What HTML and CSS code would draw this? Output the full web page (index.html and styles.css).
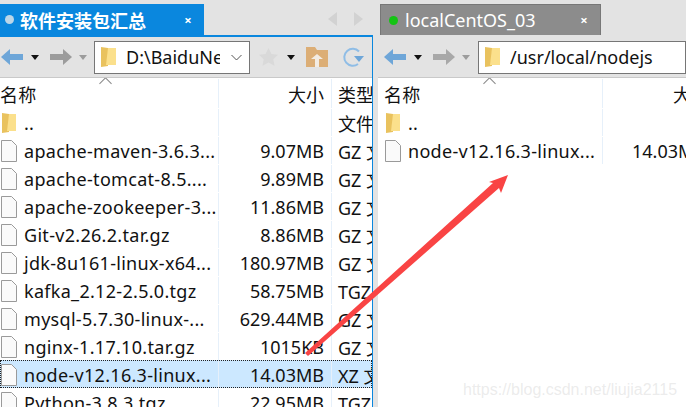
FILE: index.html
```html
<!DOCTYPE html>
<html lang="zh-CN">
<head>
<meta charset="UTF-8">
<title>软件安装包汇总</title>
<link rel="stylesheet" href="styles.css">
</head>
<body>
<div class="app">
	<section class="pane pane-left">
		<div class="tabbar">
			<div class="tab tab-on">
				<i class="dot dot-grey"></i>
				<span class="tab-name tab-name-cn">软件安装包汇总</span>
				<span class="tab-x">×</span>
			</div>
			<div class="tab-nav">
				<svg width="10" height="14" viewBox="0 0 10 14"><path d="M9 0v14L0 7z" fill="#d2d2d2"/></svg>
				<svg width="10" height="14" viewBox="0 0 10 14"><path d="M1 0v14l9-7z" fill="#d2d2d2"/></svg>
			</div>
		</div>
		<div class="panel panel-blue">
			<div class="toolbar">
				<svg class="nav-arrow" width="23" height="16" viewBox="0 0 23 16"><path d="M0 8l9-8v5h13v6H9v5z" fill="#6ea6d8"/></svg>
				<i class="caret"></i>
				<svg class="nav-arrow nav-next" width="23" height="16" viewBox="0 0 23 16"><path d="M23 8l-9-8v5H1v6h13v5z" fill="#9c9c9c"/></svg>
				<i class="caret caret-off"></i>
				<div class="path path-left">
					<svg class="folder" width="15" height="22" viewBox="0 0 15 22"><path d="M0 1l7 1v18l-7 1z" fill="#e9c25e"/><path d="M7 2h8v17H5z" fill="#fbe08c"/></svg>
					<span class="path-text">D:\BaiduNe</span>
					<svg class="chev" width="11" height="7" viewBox="0 0 11 7"><path d="M.5 1l5 5 5-5" fill="none" stroke="#555"/></svg>
				</div>
				<svg class="star" width="19" height="18" viewBox="0 0 19 18"><path d="M9.500 0l3 6 6.500.8-4.700 4.500 1.200 6.500-6-3.200-6 3.200 1.200-6.500L0 6.800 6.500 6z" fill="#d9d9d9"/></svg>
				<i class="caret caret-star"></i>
				<svg class="up" width="22" height="20" viewBox="0 0 22 20"><path d="M0 0h9l2 3h11v17H0z" fill="#dcae76"/><path d="M11 7l6 5h-4v8H9v-8H5z" fill="#f3ece3"/></svg>
				<svg class="refresh" width="24" height="21" viewBox="0 0 24 21"><path d="M18 4.500A8.500 8.500 0 1 0 17 17" fill="none" stroke="#8fbde6" stroke-width="2"/><path d="M13 9h10l-5 6z" fill="#6ea6d8"/></svg>
			</div>
			<div class="list">
				<div class="row row-head cols-left">
					<span class="col-name">名称</span><span class="col-size">大小</span><span class="col-type">类型</span>
					<i class="sort"></i>
				</div>
				<div class="row cols-left">
					<span class="col-name"><svg class="ic" width="16" height="22" viewBox="0 0 16 22"><path d="M1 1l7 1v18l-7 1z" fill="#e9c25e"/><path d="M8 2h7v17H6z" fill="#fbe08c"/></svg>..</span><span class="col-size"></span><span class="col-type">文件夹</span>
				</div>
				<div class="row cols-left">
					<span class="col-name"><svg class="ic" width="16" height="22" viewBox="0 0 16 22"><path d="M.5.500h10l5 5v16H.500z" fill="#fafafa" stroke="#9a9a9a"/></svg>apache-maven-3.6.3...</span><span class="col-size">9.07MB</span><span class="col-type">GZ 文件</span>
				</div>
				<div class="row cols-left">
					<span class="col-name"><svg class="ic" width="16" height="22" viewBox="0 0 16 22"><path d="M.5.500h10l5 5v16H.500z" fill="#fafafa" stroke="#9a9a9a"/></svg>apache-tomcat-8.5....</span><span class="col-size">9.89MB</span><span class="col-type">GZ 文件</span>
				</div>
				<div class="row cols-left">
					<span class="col-name"><svg class="ic" width="16" height="22" viewBox="0 0 16 22"><path d="M.5.500h10l5 5v16H.500z" fill="#fafafa" stroke="#9a9a9a"/></svg>apache-zookeeper-3...</span><span class="col-size">11.86MB</span><span class="col-type">GZ 文件</span>
				</div>
				<div class="row cols-left">
					<span class="col-name"><svg class="ic" width="16" height="22" viewBox="0 0 16 22"><path d="M.5.500h10l5 5v16H.500z" fill="#fafafa" stroke="#9a9a9a"/></svg>Git-v2.26.2.tar.gz</span><span class="col-size">8.86MB</span><span class="col-type">GZ 文件</span>
				</div>
				<div class="row cols-left">
					<span class="col-name"><svg class="ic" width="16" height="22" viewBox="0 0 16 22"><path d="M.5.500h10l5 5v16H.500z" fill="#fafafa" stroke="#9a9a9a"/></svg>jdk-8u161-linux-x64...</span><span class="col-size">180.97MB</span><span class="col-type">GZ 文件</span>
				</div>
				<div class="row cols-left">
					<span class="col-name"><svg class="ic" width="16" height="22" viewBox="0 0 16 22"><path d="M.5.500h10l5 5v16H.500z" fill="#fafafa" stroke="#9a9a9a"/></svg>kafka_2.12-2.5.0.tgz</span><span class="col-size">58.75MB</span><span class="col-type">TGZ 文件</span>
				</div>
				<div class="row cols-left">
					<span class="col-name"><svg class="ic" width="16" height="22" viewBox="0 0 16 22"><path d="M.5.500h10l5 5v16H.500z" fill="#fafafa" stroke="#9a9a9a"/></svg>mysql-5.7.30-linux-...</span><span class="col-size">629.44MB</span><span class="col-type">GZ 文件</span>
				</div>
				<div class="row cols-left">
					<span class="col-name"><svg class="ic" width="16" height="22" viewBox="0 0 16 22"><path d="M.5.500h10l5 5v16H.500z" fill="#fafafa" stroke="#9a9a9a"/></svg>nginx-1.17.10.tar.gz</span><span class="col-size">1015KB</span><span class="col-type">GZ 文件</span>
				</div>
				<div class="row row-sel cols-left">
					<span class="col-name"><svg class="ic" width="16" height="22" viewBox="0 0 16 22"><path d="M.5.500h10l5 5v16H.500z" fill="#fafafa" stroke="#9a9a9a"/></svg>node-v12.16.3-linux...</span><span class="col-size">14.03MB</span><span class="col-type">XZ 文件</span>
				</div>
				<div class="row cols-left">
					<span class="col-name"><svg class="ic" width="16" height="22" viewBox="0 0 16 22"><path d="M.5.500h10l5 5v16H.500z" fill="#fafafa" stroke="#9a9a9a"/></svg>Python-3.8.3.tgz</span><span class="col-size">22.95MB</span><span class="col-type">TGZ 文件</span>
				</div>
			</div>
		</div>
	</section>

	<section class="pane pane-right">
		<div class="tabbar">
			<div class="tab tab-off">
				<i class="dot dot-green"></i>
				<span class="tab-name">localCentOS_03</span>
				<span class="tab-x">×</span>
			</div>
		</div>
		<div class="panel">
			<div class="toolbar">
				<svg class="nav-arrow" width="23" height="16" viewBox="0 0 23 16"><path d="M0 8l9-8v5h13v6H9v5z" fill="#6ea6d8"/></svg>
				<i class="caret"></i>
				<svg class="nav-arrow nav-next" width="23" height="16" viewBox="0 0 23 16"><path d="M23 8l-9-8v5H1v6h13v5z" fill="#a8a8a8"/></svg>
				<i class="caret caret-off"></i>
				<div class="path path-right">
					<svg class="folder" width="15" height="22" viewBox="0 0 15 22"><path d="M0 1l7 1v18l-7 1z" fill="#e9c25e"/><path d="M7 2h8v17H5z" fill="#fbe08c"/></svg>
					<span class="path-text">/usr/local/nodejs</span>
				</div>
			</div>
			<div class="list">
				<div class="row row-head cols-right">
					<span class="col-name">名称</span><span class="col-size">大小</span>
					<i class="sort"></i>
				</div>
				<div class="row cols-right">
					<span class="col-name"><svg class="ic" width="16" height="22" viewBox="0 0 16 22"><path d="M1 1l7 1v18l-7 1z" fill="#e9c25e"/><path d="M8 2h7v17H6z" fill="#fbe08c"/></svg>..</span><span class="col-size"></span>
				</div>
				<div class="row cols-right">
					<span class="col-name"><svg class="ic" width="16" height="22" viewBox="0 0 16 22"><path d="M.5.500h10l5 5v16H.500z" fill="#fafafa" stroke="#9a9a9a"/></svg>node-v12.16.3-linux...</span><span class="col-size">14.03MB</span>
				</div>
			</div>
		</div>
	</section>
</div>

<svg class="arrow" width="686" height="407" viewBox="0 0 686 407"><path d="M305 353L493 183l-4-1 19-7-7 18-2-5L308 356z" fill="#f94444"/></svg>
<div class="mark">https://blog.csdn.net/liujia2115</div>
</body>
</html>
```

FILE: styles.css
```css
* { margin: 0; padding: 0; box-sizing: border-box; }
html, body { width: 686px; height: 407px; overflow: hidden; background: #e3e3e3; }
body { font-family: "Noto Sans", "Noto Sans CJK SC", sans-serif; font-size: 18px; color: #111; position: relative; }

.app { display: flex; gap: 5px; height: 407px; }
.pane { display: flex; flex-direction: column; min-width: 0; }
.pane-left { width: 373px; }
.pane-right { flex: 1; }

.tabbar { display: flex; height: 35px; padding-top: 4px; }
.pane-right .tabbar { padding-left: 2px; }
.tab { display: flex; align-items: center; height: 31px; }
.tab-on { width: 204px; background: #0a87de; color: #fff; padding-left: 5px; }
.tab-off { width: 221px; background: #8c8c8c; color: #fff; padding-left: 8px; border: 1px solid #777; border-bottom: 0; }
.dot { width: 9px; height: 9px; border-radius: 50%; flex: none; margin-right: 6px; }
.dot-grey { background: #bcd6e8; }
.dot-green { background: #14c414; margin-right: 7px; }
.tab-name { flex: 1; font-size: 18px; white-space: nowrap; }
.tab-name-cn { font-weight: 700; }
.tab-x { width: 12px; margin-right: 10px; font-size: 13px; font-weight: 700; text-align: center; }
.tab-nav { display: flex; gap: 15px; margin-left: 124px; padding-top: 8px; }

.panel { flex: 1; background: #fff; border-top: 2px solid #e3e3e3; min-height: 0; }
.panel-blue { border-top: 2px solid #0a87de; border-right: 1px solid #0a87de; }
.toolbar { display: flex; align-items: center; height: 41px; background: #e3e3e3; border-bottom: 1px solid #c9c9c9; padding-left: 1px; }
.pane-right .toolbar { padding-left: 6px; }
.caret { width: 0; height: 0; margin-left: 7px; border: 4px solid transparent; border-top: 5px solid #111; border-bottom: 0; }
.caret-off { border-top-color: #9c9c9c; }
.nav-next { margin-left: 10px; }
.path { display: flex; align-items: center; height: 33px; margin-left: 7px; background: #fff; border: 1px solid #767676; }
.path-left { width: 156px; padding-left: 6px; }
.path-right { flex: 1; margin-left: 8px; padding-left: 6px; }
.folder { flex: none; }
.path-text { margin-left: 10px; white-space: nowrap; overflow: hidden; }
.path-left .path-text { width: 94px; flex: none; }
.chev { margin-left: 11px; flex: none; }
.star { margin-left: 9px; }
.caret-star { margin-left: 9px; }
.up { margin-left: 11px; }
.refresh { margin-left: 13px; }

.list { background: #fff; height: 330px; overflow: hidden; }
.row { display: grid; align-items: center; height: 28px; padding-top: 1px; white-space: nowrap; position: relative; }
.cols-left { grid-template-columns: 219px 113px 1fr; }
.cols-right { grid-template-columns: 225px 1fr; }
.row-head { height: 30px; }
.row-sel { background: #cce8ff; outline: 1px dotted #222; outline-offset: -1px; }
.col-name { display: flex; align-items: center; height: 100%; border-right: 1px solid #e6f0fa; overflow: hidden; letter-spacing: .3px; }
.col-size { display: flex; align-items: center; justify-content: flex-end; height: 100%; padding-right: 7px; border-right: 1px solid #e6f0fa; }
.col-type { padding-left: 6px; overflow: hidden; }
.ic { flex: none; margin: 0 7px 0 1px; }
.cols-right .col-name { padding-left: 6px; }
.cols-right .col-size { justify-content: flex-start; padding: 0 0 0 29px; border: 0; }
.cols-right.row-head .col-size { padding-left: 70px; }
.sort { position: absolute; top: 1px; left: 101px; width: 9px; height: 9px; border-left: 1px solid #888; border-top: 1px solid #888; transform: rotate(45deg); }
.cols-right .sort { left: 107px; }

.arrow { position: absolute; left: 0; top: 0; pointer-events: none; }
.mark { position: absolute; left: 463px; top: 381px; font-family: "Liberation Sans", sans-serif; font-size: 16px; color: rgba(190, 190, 190, .3); white-space: nowrap; }
```
